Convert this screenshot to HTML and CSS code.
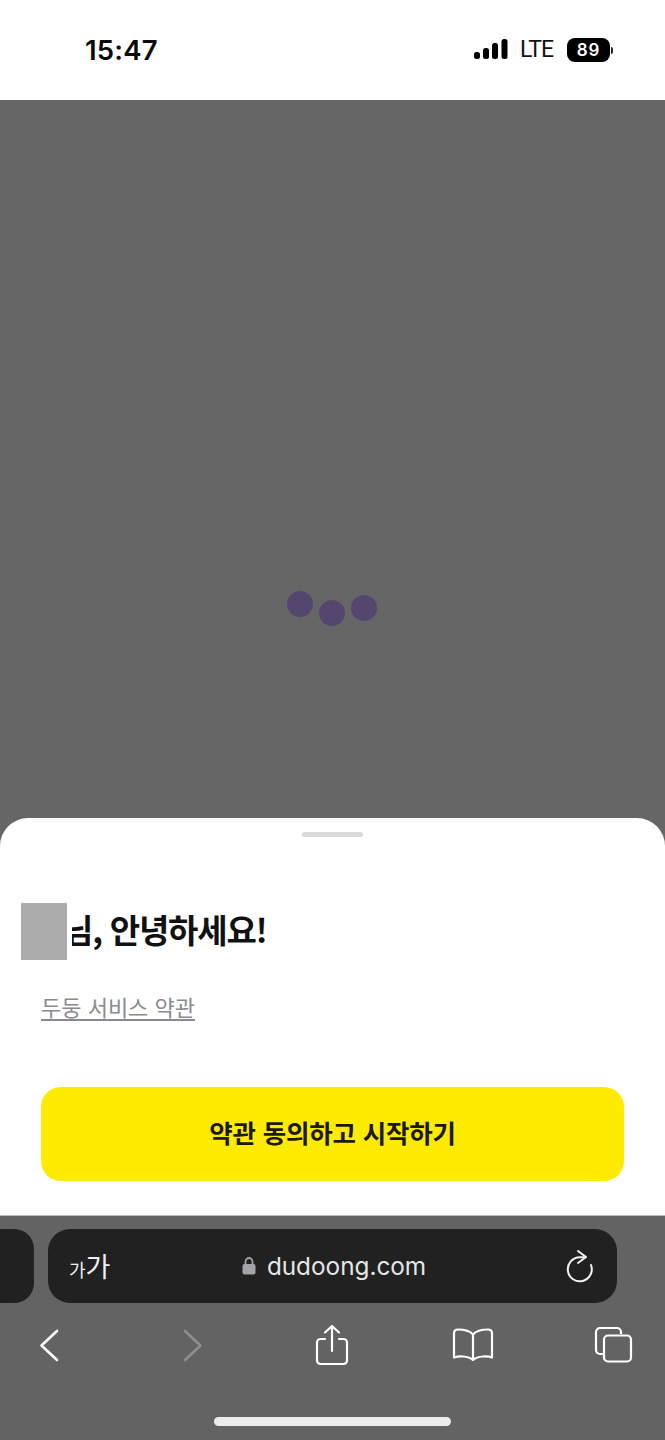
FILE: index.html
```html
<!DOCTYPE html>
<html lang="ko">
<head>
<meta charset="utf-8">
<title>두둥</title>
<link rel="stylesheet" href="styles.css">
</head>
<body>
<div class="phone">
  <header class="status">
    <span class="time">15:47</span>
    <div class="status-right">
      <svg class="signal" width="34" height="22" viewBox="0 0 34 22"><rect x="0" y="14" width="6" height="7" rx="2.500"/><rect x="9" y="10" width="6" height="11" rx="2.500"/><rect x="18" y="5" width="6" height="16" rx="2.500"/><rect x="27.500" y="1" width="6" height="20" rx="2.500"/></svg>
      <span class="lte">LTE</span>
      <span class="battery"><span class="battery-body">89</span><span class="battery-cap"></span></span>
    </div>
  </header>
  <main class="backdrop">
    <div class="dots">
      <span class="dot dot-a"></span>
      <span class="dot dot-b"></span>
      <span class="dot dot-c"></span>
    </div>
  </main>
  <section class="sheet">
    <div class="handle"></div>
    <div class="greeting">
      <h1 class="title">님, 안녕하세요!</h1>
      <div class="redact"></div>
    </div>
    <a class="terms">두둥 서비스 약관</a>
    <button class="cta">약관 동의하고 시작하기</button>
  </section>
  <footer class="toolbar">
    <div class="tabs">
      <div class="tab-prev"></div>
      <div class="address">
        <span class="aa"><span class="aa-small">가</span><span class="aa-big">가</span></span>
        <span class="url">
          <svg width="14" height="20" viewBox="0 0 14 20"><path d="M3.500 9V5.500a3.500 3.500 0 0 1 7 0V9" fill="none" stroke="#a3a3a8" stroke-width="1.800"/><rect x="0.500" y="8" width="13" height="10.500" rx="2" fill="#a3a3a8"/></svg>
          <span>dudoong.com</span>
        </span>
        <svg class="reload" width="28" height="34" viewBox="0 0 28 34"><path d="M20.500 8.300H14.700A12 12 0 1 0 26 16" fill="none" stroke="#f2f2f2" stroke-width="2" stroke-linecap="round"/><path d="M13 2L21 8 13 14" fill="none" stroke="#f2f2f2" stroke-width="2" stroke-linecap="round" stroke-linejoin="round"/></svg>
      </div>
    </div>
    <nav class="nav">
      <span class="nav-slot"><svg width="24" height="34" viewBox="0 0 24 34"><path d="M20 3L4.500 17.500 20 32" fill="none" stroke="#fff" stroke-width="2.600" stroke-linecap="round" stroke-linejoin="round"/></svg></span>
      <span class="nav-slot nav-slot-forward"><svg width="24" height="34" viewBox="0 0 24 34"><path d="M4 3l15.500 14.500L4 32" fill="none" stroke="#8e8e8e" stroke-width="2.600" stroke-linecap="round" stroke-linejoin="round"/></svg></span>
      <span class="nav-slot"><svg width="34" height="42" viewBox="0 0 34 42"><path d="M10 15H5.500A3.500 3.500 0 0 0 2 18.500v18A3.500 3.500 0 0 0 5.500 40h23a3.500 3.500 0 0 0 3.500-3.500v-18a3.500 3.500 0 0 0-3.500-3.500H24M17 27V2M10 8.500L17 2l7 6.500" fill="none" stroke="#fff" stroke-width="2.200" stroke-linecap="round" stroke-linejoin="round"/></svg></span>
      <span class="nav-slot"><svg width="42" height="34" viewBox="0 0 42 34"><path d="M21 6.500C18 3 13 1.500 6 1.500 3.500 1.500 2 3 2 5.500v24c4-1.500 14-2 19 2.500 5-4.500 15-4 19-2.500v-24c0-2.500-1.500-4-4-4-7 0-12 1.500-15 5zM21 6.500V32" fill="none" stroke="#fff" stroke-width="2.200" stroke-linejoin="round"/></svg></span>
      <span class="nav-slot"><svg width="40" height="38" viewBox="0 0 40 38"><path d="M9 28H6a4 4 0 0 1-4-4V6a4 4 0 0 1 4-4h17a4 4 0 0 1 4 4v2" fill="none" stroke="#fff" stroke-width="2.200"/><rect x="10" y="9.500" width="27" height="26" rx="4" fill="none" stroke="#fff" stroke-width="2.200"/></svg></span>
    </nav>
    <div class="home-bar"></div>
  </footer>
</div>
</body>
</html>
```
FILE: styles.css
```css
* { box-sizing: border-box; }
html, body { margin: 0; padding: 0; }
body { background: #fff; font-family: "Noto Sans CJK KR", "Noto Sans", sans-serif; }
.phone { width: 665px; height: 1440px; display: flex; flex-direction: column; overflow: hidden; }

.status { height: 100px; flex: none; background: #fff; display: flex; align-items: flex-start; justify-content: space-between; padding: 31px 52px 0 85px; }
.time { font-family: Inter, "Liberation Sans", sans-serif; font-size: 27.500px; line-height: 38px; font-weight: 600; color: #0a0a0a; letter-spacing: 0.2px; }
.status-right { display: flex; align-items: center; height: 38px; }
.signal { fill: #000; margin-right: 12px; margin-bottom: 2px; }
.lte { font-family: Roboto, "Liberation Sans", sans-serif; font-size: 23px; line-height: 26px; color: #111; margin-right: 14px; letter-spacing: -1px; }
.battery { display: flex; align-items: center; }
.battery-body { width: 43px; height: 24px; border-radius: 8px; background: #000; color: #fff; font-family: Inter, "Liberation Sans", sans-serif; font-size: 17px; font-weight: 600; line-height: 24px; text-align: center; letter-spacing: 0.8px; }
.battery-cap { width: 2px; height: 7px; background: #222; border-radius: 0 2px 2px 0; margin-left: 1px; }

.backdrop { flex: 1; background: #666; display: flex; justify-content: center; padding-top: 490px; }
.dots { display: flex; gap: 6px; align-items: flex-start; margin-left: -1px; }
.dot { width: 26px; height: 26px; border-radius: 50%; background: #54466f; }
.dot-a { margin-top: 1px; }
.dot-b { margin-top: 10px; }
.dot-c { margin-top: 5px; }

.sheet { flex: none; height: 397px; margin-top: -28px; background: #fff; border-radius: 28px 28px 0 0; padding: 14px 41px 0; display: flex; flex-direction: column; }
.handle { width: 61px; height: 5px; border-radius: 3px; background: #d9d9d9; align-self: center; }
.greeting { position: relative; margin-top: 66px; height: 57px; display: flex; align-items: center; }
.title { margin: -5px 0 0 22px; font-size: 33px; line-height: 40px; font-weight: 700; color: #111; letter-spacing: -1.200px; }
.redact { position: absolute; left: -20px; top: 0; width: 51px; height: 57px; background: #acacac; border-right: 5px solid #fff; }
.terms { margin-top: 31px; align-self: flex-start; font-size: 22px; line-height: 30px; color: #8a8a92; text-decoration: underline; text-underline-offset: 3px; }
.cta { margin-top: 66px; height: 94px; padding: 0 0 5px; border: 0; border-radius: 20px; background: #ffeb00; color: #1a1a1a; font-family: inherit; font-size: 25.500px; font-weight: 600; letter-spacing: -0.2px; }

.toolbar { flex: none; height: 225px; background: #636363; display: flex; flex-direction: column; align-items: stretch; border-top: 1px solid #bdbdbd; }
.tabs { display: flex; gap: 14px; margin-top: 13px; margin-left: -40px; }
.tab-prev { width: 74px; height: 74px; background: #212121; border-radius: 20px; flex: none; }
.address { width: 569px; height: 74px; background: #212121; border-radius: 22px; flex: none; display: flex; align-items: center; padding: 0 24px 0 21px; color: #f0f0f0; }
.aa { display: flex; align-items: flex-end; width: 44px; flex: none; }
.aa-small { font-size: 18px; line-height: 24px; }
.aa-big { font-size: 27px; line-height: 30px; font-weight: 400; }
.url { flex: 1; display: flex; align-items: center; justify-content: center; gap: 11px; font-family: Inter, "Liberation Sans", sans-serif; font-size: 24.300px; color: #e6e6e6; padding-right: 10px; }
.reload { flex: none; }
.nav { display: flex; justify-content: space-between; align-items: center; height: 44px; margin-top: 20px; padding: 0 29px 0 27px; }
.nav-slot { width: 44px; height: 44px; display: flex; align-items: center; justify-content: center; flex: none; }
.nav-slot-forward { padding-left: 6px; }
.home-bar { width: 237px; height: 9px; background: #ececec; border-radius: 5px; align-self: center; margin-top: 50px; }
```
